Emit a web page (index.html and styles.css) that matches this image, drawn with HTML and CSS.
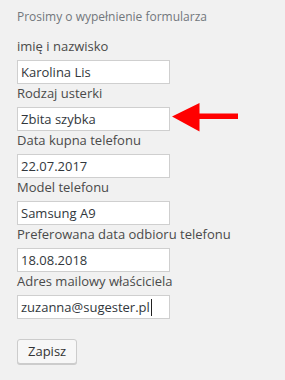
FILE: index.html
```html
<!DOCTYPE html>
<html lang="pl">
<head>
  <meta charset="UTF-8" />
  <title>Formularz zgłoszenia</title>
  <link rel="stylesheet" href="styles.css">
</head>
<body>

  <form class="form">
    <p class="intro">Prosimy o wypełnienie formularza</p>

    <label class="label" for="name">imię i nazwisko</label>
    <input class="input" id="name" type="text" value="Karolina Lis">

    <label class="label" for="fault">Rodzaj usterki</label>
    <div class="row">
      <input class="input" id="fault" type="text" value="Zbita szybka">
      <svg class="arrow" width="69" height="30" viewBox="0 0 69 30">
        <polygon points="1,14.5 28.5,1 28.5,11.5 67,11.5 67,17 28.5,17 28.5,29.5" fill="#ff0000" />
      </svg>
    </div>

    <label class="label" for="bought">Data kupna telefonu</label>
    <input class="input" id="bought" type="text" value="22.07.2017">

    <label class="label" for="model">Model telefonu</label>
    <input class="input" id="model" type="text" value="Samsung A9">

    <label class="label" for="pickup">Preferowana data odbioru telefonu</label>
    <input class="input" id="pickup" type="text" value="18.08.2018">

    <label class="label" for="email">Adres mailowy właściciela</label>
    <div class="input focused" id="email">zuzanna@sugester.pl<span class="caret"></span></div>

    <button class="button" type="button">Zapisz</button>
  </form>

</body>
</html>
```

FILE: styles.css
```css
* {
  box-sizing: border-box;
}

body {
  margin: 0;
  padding: 9px 17px;
  background: #f1f1f1;
  font-family: 'Open Sans', 'Noto Sans', sans-serif;
  color: #444;
}

.form {
  display: flex;
  flex-direction: column;
  align-items: flex-start;
}

.intro {
  margin: 0 0 12px;
  font-size: 12px;
  line-height: 16px;
  color: #72777c;
}

.label {
  display: block;
  font-size: 13px;
  line-height: 19px;
  margin-bottom: 4px;
  color: #4a4a4a;
}

.input {
  width: 153px;
  height: 24px;
  margin: 0;
  padding: 0 3px;
  border: 1px solid #cfcfcf;
  background: #fff;
  font-family: inherit;
  font-size: 13px;
  color: #32373c;
  outline: none;
}

.focused {
  display: flex;
  align-items: center;
  white-space: nowrap;
}

.caret {
  display: inline-block;
  width: 1px;
  height: 17px;
  margin-left: 1px;
  background: #222;
}

.row {
  position: relative;
}

.row .input {
  display: block;
}

.arrow {
  position: absolute;
  left: 154px;
  top: -5px;
}

.button {
  margin-top: 20px;
  height: 25px;
  padding: 0 10px 1px;
  border: 1px solid #cccccc;
  border-radius: 3px;
  background: #f7f7f7;
  box-shadow: 0 1px 0 #cccccc;
  font-family: inherit;
  font-size: 13px;
  color: #333;
  cursor: pointer;
}
```
